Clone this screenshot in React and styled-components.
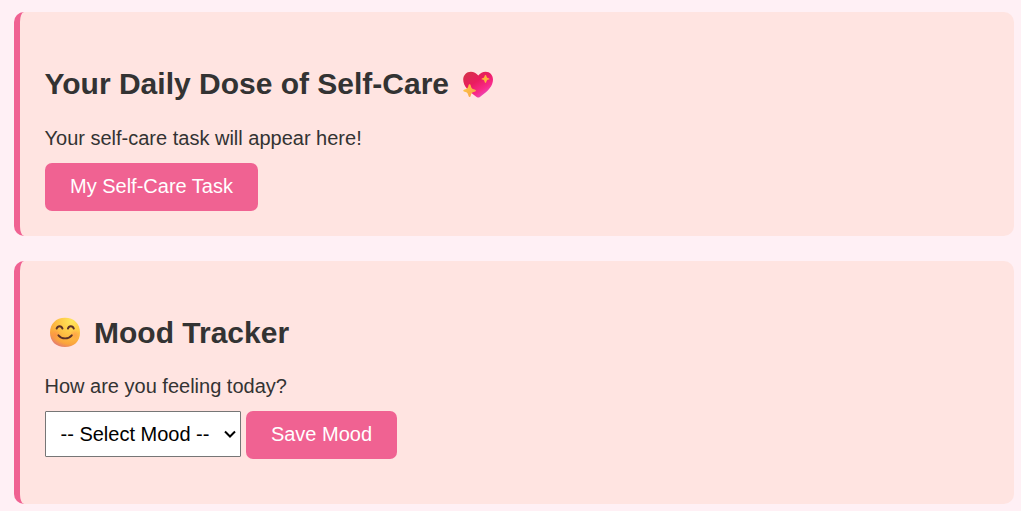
import React, { useState } from 'react'
import styled, { createGlobalStyle } from 'styled-components'

const GlobalStyle = createGlobalStyle`
  body {
    margin: 0;
    background: #fff0f5;
    color: #333;
    font-family: "Liberation Sans", Arial, sans-serif;
    font-size: 20px;
    line-height: 23px;
  }
`

const Page = styled.main`
  box-sizing: border-box;
  height: 511px;
  padding: 12px 7px 7px 14px;
  display: flex;
  flex-direction: column;
  gap: 25px;
  overflow: hidden;
`

const Card = styled.section`
  box-sizing: border-box;
  height: ${({ $height }) => $height}px;
  flex-shrink: 0;
  padding: 55px 25px 25px;
  background: #ffe4e1;
  border-left: 6px solid #f06292;
  border-radius: 10px;
`

const Title = styled.h2`
  display: flex;
  align-items: center;
  height: 34px;
  margin: 0 0 ${({ $gap }) => $gap}px;
  font-size: 30px;
  line-height: 34px;
  text-indent: -0.5px;
  white-space: pre;
`

const Emoji = styled.svg`
  width: 32px;
  height: 32px;
  flex-shrink: 0;
  margin: ${({ $margin }) => $margin};
`

const Text = styled.p`
  margin: 0 0 13px;
  text-indent: -0.5px;
`

const Row = styled.div`
  display: flex;
  align-items: flex-start;
  gap: 5px;
`

const Button = styled.button`
  box-sizing: border-box;
  width: ${({ $width }) => $width}px;
  height: 48px;
  padding: 0 0 1px;
  border: none;
  border-radius: 7px;
  background: #f06292;
  color: white;
  font: inherit;
  cursor: pointer;
`

const SelectWrap = styled.div`
  position: relative;
  width: 196px;
  height: 46px;
`

const Select = styled.select`
  appearance: none;
  box-sizing: border-box;
  width: 100%;
  height: 100%;
  padding: 0 24px 0 14.5px;
  border: 1px solid #767676;
  border-radius: 1px;
  background: white;
  color: black;
  font: inherit;
`

const Arrow = styled.svg`
  position: absolute;
  right: 5px;
  top: 19px;
  width: 12px;
  height: 9px;
  pointer-events: none;
`

const HeartIcon = () => (
  <Emoji $margin="3px 0 0 13px" viewBox="0 0 32 32" aria-label="sparkling heart">
    <defs>
      <linearGradient id="heart" x1="0.1" y1="0.1" x2="0.75" y2="0.95">
        <stop offset="0" stopColor="#d8304c" />
        <stop offset="0.4" stopColor="#ea1c60" />
        <stop offset="0.75" stopColor="#f92a8a" />
        <stop offset="1" stopColor="#e650c4" />
      </linearGradient>
      <linearGradient id="spark" x1="0" y1="0" x2="1" y2="1">
        <stop offset="0" stopColor="#ffcb48" />
        <stop offset="1" stopColor="#f5a043" />
      </linearGradient>
    </defs>
    <path
      fill="url(#heart)"
      d="M16.3 5.6C14.3 3 11.8 1.7 8.9 1.7C4.5 1.7 1.2 5.1 1.2 9.6C1.2 16 6.5 21.7 14.6 26.9C15.8 27.7 16.7 27.7 17.9 26.9C26 21.7 31 16 31 9.6C31 5.1 28 1.7 23.6 1.7C20.7 1.7 18.2 3 16.3 5.6Z"
    />
    <path
      fill="url(#spark)"
      d="M7.6 14.2C8.2 14.2 8.5 14.6 8.7 15.4C9.4 18.2 10 18.8 12.6 19.5C13.5 19.7 13.9 20 13.9 20.6C13.9 21.2 13.5 21.5 12.6 21.7C10 22.4 9.4 23 8.7 25.8C8.5 26.6 8.2 27 7.6 27C7 27 6.7 26.6 6.5 25.8C5.8 23 5.2 22.4 2.6 21.7C1.7 21.5 1.3 21.2 1.3 20.6C1.3 20 1.7 19.7 2.6 19.5C5.2 18.8 5.8 18.2 6.5 15.4C6.7 14.6 7 14.2 7.6 14.2Z"
    />
    <path
      fill="#ffb33c"
      d="M23.5 4.9C24 4.9 24.2 5.3 24.3 5.7C24.7 7.4 25.1 7.8 26.6 8.2C27.1 8.3 27.4 8.5 27.4 8.9C27.4 9.3 27.1 9.5 26.6 9.6C25.1 10 24.7 10.4 24.3 12.1C24.2 12.5 24 12.9 23.5 12.9C23 12.9 22.8 12.5 22.7 12.1C22.3 10.4 21.9 10 20.4 9.6C19.9 9.5 19.6 9.3 19.6 8.9C19.6 8.5 19.9 8.3 20.4 8.2C21.9 7.8 22.3 7.4 22.7 5.7C22.8 5.3 23 4.9 23.5 4.9Z"
    />
  </Emoji>
)

const SmileIcon = () => (
  <Emoji $margin="0 13.5px 0 4px" viewBox="0 0 32 32" aria-label="smiling face">
    <defs>
      <radialGradient id="face" cx="0.72" cy="0.12" r="1">
        <stop offset="0" stopColor="#ffe65c" />
        <stop offset="0.4" stopColor="#ffc846" />
        <stop offset="0.78" stopColor="#fba53c" />
        <stop offset="1" stopColor="#dd6f80" />
      </radialGradient>
      <radialGradient id="cheek">
        <stop offset="0" stopColor="#ff7552" stopOpacity="0.4" />
        <stop offset="1" stopColor="#ff7552" stopOpacity="0" />
      </radialGradient>
    </defs>
    <path
      fill="url(#face)"
      d="M16 .8C25 .8 31 6.8 31 15.8C31 24.4 25 30.1 16 30.1C7 30.1 1 24.4 1 15.8C1 6.8 7 .8 16 .8Z"
    />
    <circle cx="6.5" cy="17.5" r="5" fill="url(#cheek)" />
    <circle cx="25.8" cy="17.5" r="5" fill="url(#cheek)" />
    <g fill="none" stroke="#5b3028" strokeWidth="1.9" strokeLinecap="round" strokeLinejoin="round">
      <path d="M7.6 11.6C8.1 10 9.2 9.2 10.6 9.2C12 9.2 13 10 13.5 11.6" />
      <path d="M18.9 11.6C19.4 10 20.4 9.2 21.8 9.2C23.2 9.2 24.3 10 24.8 11.6" />
      <path d="M9.4 18.3C11.1 20.4 13.3 21.4 16.1 21.4C18.9 21.4 21.1 20.4 22.8 18.3" />
    </g>
  </Emoji>
)

const App = () => {
  const [mood, setMood] = useState('')

  return (
    <>
      <GlobalStyle />
      <Page>
        <Card $height={224}>
          <Title $gap={26}>
            Your Daily Dose of Self-Care
            <HeartIcon />
          </Title>
          <Text>Your self-care task will appear here!</Text>
          <Button $width={213}>My Self-Care Task</Button>
        </Card>
        <Card $height={243}>
          <Title $gap={25}>
            <SmileIcon />
            Mood Tracker
          </Title>
          <Text>How are you feeling today?</Text>
          <Row>
            <SelectWrap>
              <Select value={mood} onChange={(e) => setMood(e.target.value)}>
                <option value="">-- Select Mood --</option>
              </Select>
              <Arrow viewBox="0 0 12 9">
                <path d="M1 1.5L6 6.5L11 1.5" fill="none" stroke="black" strokeWidth="2" />
              </Arrow>
            </SelectWrap>
            <Button $width={151}>Save Mood</Button>
          </Row>
        </Card>
      </Page>
    </>
  )
}

export default App
